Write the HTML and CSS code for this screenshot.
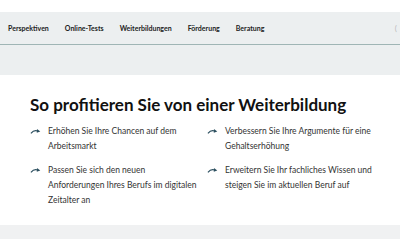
FILE: index.html
```html
<!DOCTYPE html>
<html lang="de">
<head>
  <meta charset="UTF-8">
  <meta name="viewport" content="width=device-width, initial-scale=1.0">
  <title>Weiterbildung</title>
<link rel="stylesheet" href="styles.css">
</head>
<body>
<div class="topgap"></div>
<nav>
    <a href="#">Perspektiven</a>
    <a href="#">Online-Tests</a>
    <a href="#">Weiterbildungen</a>
    <a href="#">Förderung</a>
    <a href="#">Beratung</a>
    <span class="nav-end">(</span>
</nav>
<div class="band"></div>

<section class="benefits">
    <h2>So profitieren Sie von einer Weiterbildung</h2>
    <ul class="list">
        <li><svg class="arrow" viewBox="0 0 12 8"><path d="M1 6.5 C3.5 3.5 6 3 8.5 4" /><polygon points="7.6,1.9 11.2,4.6 7.4,5.8" /></svg><span>Erhöhen Sie Ihre Chancen auf dem Arbeitsmarkt</span></li>
        <li><svg class="arrow" viewBox="0 0 12 8"><path d="M1 6.5 C3.5 3.5 6 3 8.5 4" /><polygon points="7.6,1.9 11.2,4.6 7.4,5.8" /></svg><span>Verbessern Sie Ihre Argumente für eine Gehaltserhöhung</span></li>
        <li><svg class="arrow" viewBox="0 0 12 8"><path d="M1 6.5 C3.5 3.5 6 3 8.5 4" /><polygon points="7.6,1.9 11.2,4.6 7.4,5.8" /></svg><span>Passen Sie sich den neuen Anforderungen Ihres Berufs im digitalen Zeitalter an</span></li>
        <li><svg class="arrow" viewBox="0 0 12 8"><path d="M1 6.5 C3.5 3.5 6 3 8.5 4" /><polygon points="7.6,1.9 11.2,4.6 7.4,5.8" /></svg><span>Erweitern Sie Ihr fachliches Wissen und steigen Sie im aktuellen Beruf auf</span></li>
    </ul>
</section>

<div class="band-bottom"></div>
</body>
</html>
```

FILE: styles.css
```css
/* Reset */
* {
  margin: 0;
  padding: 0;
  box-sizing: border-box;
}

body {
  background-color: #fff;
  font-family: "Lato", "Open Sans", sans-serif;
  color: #333;
}

.topgap {
  height: 12px;
}

/* Navigation */
nav {
  background-color: #eceff0;
  height: 33px;
  border-bottom: 1px solid #9fb5b5;
  display: flex;
  align-items: center;
  padding-left: 8px;
  gap: 16px;
  overflow: hidden;
}

nav a {
  color: #222;
  text-decoration: none;
  font-size: 7px;
  font-weight: 700;
}

.nav-end {
  margin-left: auto;
  margin-right: 3px;
  color: #bbb;
  font-size: 8px;
}

.band {
  height: 30px;
  background-color: #eceff0;
}

/* Benefits */
.benefits {
  padding: 19px 12px 0 30px;
  height: 150px;
}

.benefits h2 {
  font-size: 17px;
  font-weight: 700;
  color: #111;
  line-height: 22px;
  margin-bottom: 8px;
}

.list {
  list-style: none;
  display: grid;
  grid-template-columns: 177px 1fr;
  row-gap: 9px;
}

.list li {
  display: flex;
  gap: 7px;
  font-size: 8.5px;
  line-height: 15px;
  color: #333;
}

.list li span {
  max-width: 152px;
}

.list li:nth-child(even) span {
  max-width: 162px;
}

.arrow {
  width: 11px;
  height: 8px;
  flex-shrink: 0;
  margin-top: 3px;
}

.arrow path {
  fill: none;
  stroke: #2c4f5f;
  stroke-width: 1.3;
}

.arrow polygon {
  fill: #2c4f5f;
}

.band-bottom {
  height: 14px;
  background-color: #f0f1f2;
}
```
